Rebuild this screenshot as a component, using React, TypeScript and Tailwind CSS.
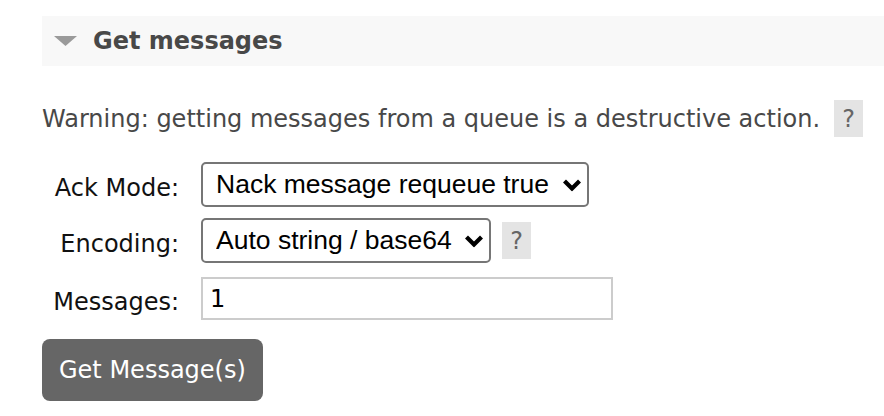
import { useState } from 'react';

// -----------------------------------------------------------------------------
// Bits
// -----------------------------------------------------------------------------

const HelpTip: React.FC = () => (
  <span className="flex h-[37px] w-[29px] items-center justify-center bg-[#e4e4e4] text-[24px] text-[#666]">
    ?
  </span>
);

const Chevron: React.FC = () => (
  <svg
    className="pointer-events-none absolute right-[7px] top-1/2 -translate-y-1/2"
    width="20"
    height="13"
    viewBox="0 0 20 13"
  >
    <polyline points="2.5,2.5 10,10 17.5,2.5" fill="none" stroke="#000" strokeWidth="4.2" />
  </svg>
);

type SelectProps = {
  width: string;
  value: string;
  options: string[];
  onChange: (v: string) => void;
};

const Select: React.FC<SelectProps> = ({ width, value, options, onChange }) => (
  <div className={`relative ${width}`}>
    <select
      className="h-[45px] w-full appearance-none rounded-[5px] border-2 border-[#767676] bg-white pl-[13px] text-[26.5px] text-black outline-none"
      style={{ fontFamily: '"Liberation Sans", Arial, sans-serif' }}
      value={value}
      onChange={(e) => onChange(e.target.value)}
    >
      {options.map((o) => (
        <option key={o}>{o}</option>
      ))}
    </select>
    <Chevron />
  </div>
);

// -----------------------------------------------------------------------------
// Page
// -----------------------------------------------------------------------------

const ackModes = ['Nack message requeue true', 'Automatic ack', 'Reject requeue true', 'Reject requeue false'];
const encodings = ['Auto string / base64', 'base64'];

export default function App() {
  const [ack, setAck] = useState(ackModes[0]);
  const [enc, setEnc] = useState(encodings[0]);
  const [count, setCount] = useState('1');

  return (
    <div
      className="h-[416px] w-[884px] overflow-hidden bg-white pl-[42px] pt-[16px] text-[24px] text-[#484848]"
      style={{ fontFamily: '"DejaVu Sans", Verdana, sans-serif' }}
    >
      <div className="flex h-[50px] items-center bg-[#f8f8f8]">
        <svg className="ml-[12px]" width="23" height="10" viewBox="0 0 23 10">
          <polygon points="0,0 23,0 11.5,10" fill="#9a9a9a" />
        </svg>
        <h2 className="ml-[16px] text-[24px] font-bold text-[#484848]">Get messages</h2>
      </div>

      <div className="mt-[34px] flex h-[37px] items-center gap-[14px]">
        <p>Warning: getting messages from a queue is a destructive action.</p>
        <HelpTip />
      </div>

      <div className="mt-[25px] grid grid-cols-[137px_auto] items-center gap-x-[22px]">
        <label className="pt-[6px] text-right text-[#111]">Ack Mode:</label>
        <Select width="w-[388px]" value={ack} options={ackModes} onChange={setAck} />

        <label className="mt-[11px] pt-[6px] text-right text-[#111]">Encoding:</label>
        <div className="mt-[11px] flex items-center gap-[11px]">
          <Select width="w-[290px]" value={enc} options={encodings} onChange={setEnc} />
          <HelpTip />
        </div>

        <label className="mt-[14px] pt-[6px] text-right text-[#111]">Messages:</label>
        <input
          className="mt-[14px] h-[43px] w-[412px] border-2 border-[#cccccc] px-[7px] text-[24px] text-black outline-none"
          value={count}
          onChange={(e) => setCount(e.target.value)}
        />
      </div>

      <button className="mt-[19px] h-[62px] rounded-[8px] bg-[#666666] px-[17px] text-[24px] text-white">
        Get Message(s)
      </button>
    </div>
  );
}
